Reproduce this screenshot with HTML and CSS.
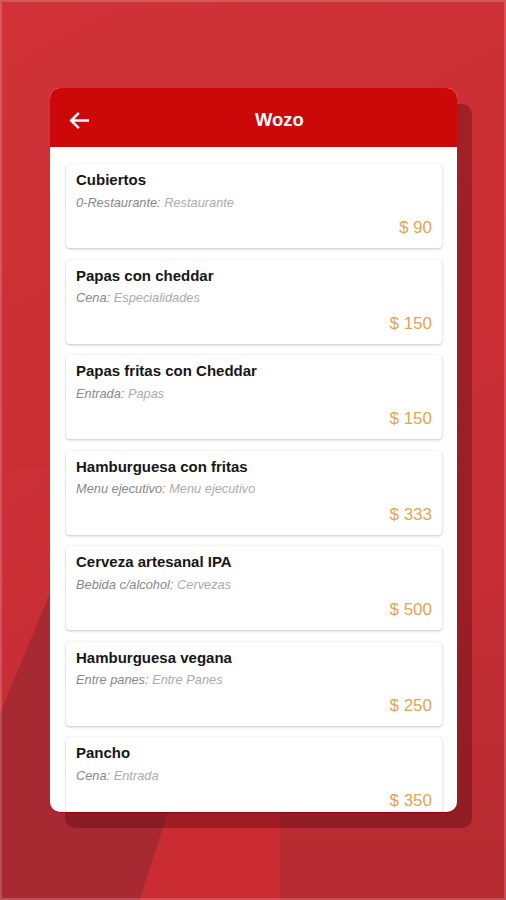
FILE: index.html
```html
<!DOCTYPE html>
<html lang="es">
<head>
<meta charset="utf-8">
<title>Wozo</title>
<link rel="stylesheet" href="styles.css">
</head>
<body>
<div class="screen">
  <svg class="bg" width="506" height="900" viewBox="0 0 506 900" aria-hidden="true">
    <defs>
      <linearGradient id="base" x1="0" y1="0" x2="0.3" y2="1">
        <stop offset="0" stop-color="#d03237"/>
        <stop offset="1" stop-color="#c42d34"/>
      </linearGradient>
      <linearGradient id="right" x1="0" y1="0" x2="0" y2="1">
        <stop offset="0" stop-color="#c22d34"/>
        <stop offset="1" stop-color="#b42a30"/>
      </linearGradient>
    </defs>
    <rect width="506" height="900" fill="url(#base)"/>
    <polygon points="48,468 4,582 0,590 0,470" fill="#cb3239" opacity="0.6"/>
    <polygon points="280,700 506,600 506,900 280,900" fill="url(#right)"/>
    <polygon points="50,593 0,713 0,900 140,900 168,812 200,600" fill="#a72a33"/>
    <polygon points="140,900 168,812 280,812 280,900" fill="#cb2b33"/>
  </svg>
  <div class="frame">
    <header class="bar">
      <svg class="back" width="20" height="17" viewBox="0 0 20 17" aria-hidden="true">
        <path d="M19 8.5H2.5M9 1.8L2.2 8.5L9 15.2" fill="none" stroke="#fff" stroke-width="2.4" stroke-linecap="square"/>
      </svg>
      <h1 class="title">Wozo</h1>
    </header>
    <div class="list">
      <div class="item">
        <div class="name">Cubiertos</div>
        <div class="cat"><span class="grp">0-Restaurante:</span> Restaurante</div>
        <div class="price">$ 90</div>
      </div>
      <div class="item">
        <div class="name">Papas con cheddar</div>
        <div class="cat"><span class="grp">Cena:</span> Especialidades</div>
        <div class="price">$ 150</div>
      </div>
      <div class="item">
        <div class="name">Papas fritas con Cheddar</div>
        <div class="cat"><span class="grp">Entrada:</span> Papas</div>
        <div class="price">$ 150</div>
      </div>
      <div class="item">
        <div class="name">Hamburguesa con fritas</div>
        <div class="cat"><span class="grp">Menu ejecutivo:</span> Menu ejecutivo</div>
        <div class="price">$ 333</div>
      </div>
      <div class="item">
        <div class="name">Cerveza artesanal IPA</div>
        <div class="cat"><span class="grp">Bebida c/alcohol:</span> Cervezas</div>
        <div class="price">$ 500</div>
      </div>
      <div class="item">
        <div class="name">Hamburguesa vegana</div>
        <div class="cat"><span class="grp">Entre panes:</span> Entre Panes</div>
        <div class="price">$ 250</div>
      </div>
      <div class="item">
        <div class="name">Pancho</div>
        <div class="cat"><span class="grp">Cena:</span> Entrada</div>
        <div class="price">$ 350</div>
      </div>
    </div>
  </div>
</div>
</body>
</html>
```
FILE: styles.css
```css
html, body {
  margin: 0;
  padding: 0;
  background: #cd2f35;
}

.screen {
  position: relative;
  width: 506px;
  height: 900px;
  overflow: hidden;
  font-family: "Liberation Sans", Arial, sans-serif;
  display: flow-root;
}

.screen::after {
  content: "";
  position: absolute;
  inset: 0;
  box-shadow: inset 0 0 0 2px rgba(255, 255, 255, 0.18);
  pointer-events: none;
}

.bg {
  position: absolute;
  left: 0;
  top: 0;
  z-index: 0;
}

.frame {
  position: relative;
  z-index: 1;
  margin: 88px 0 0 50px;
  width: 407px;
  height: 724px;
  border-radius: 10px;
  background: #ffffff;
  overflow: hidden;
  box-shadow: 15px 16px 0 rgba(70, 0, 8, 0.33), 0 1px 0 #b5080c;
}

.bar {
  height: 59px;
  box-sizing: border-box;
  padding: 6px 0 0 19px;
  display: flex;
  align-items: center;
  background: #cd0808;
}

.back {
  display: block;
  flex: none;
}

.title {
  margin: 0 0 0 166px;
  color: #ffffff;
  font-size: 18.4px;
  font-weight: bold;
  line-height: 1;
}

.list {
  padding: 17px 15px 0 16px;
  display: flex;
  flex-direction: column;
  gap: 11.5px;
}

.item {
  height: 84px;
  flex: none;
  box-sizing: border-box;
  padding: 7px 10px 10px 10px;
  background: #ffffff;
  border-radius: 4px;
  box-shadow: 0 1px 3px rgba(0, 0, 0, 0.22), 0 0 1px rgba(0, 0, 0, 0.12);
  display: flex;
  flex-direction: column;
}

.name {
  font-size: 15px;
  line-height: 18px;
  font-weight: bold;
  color: #161616;
}

.cat {
  margin-top: 5.5px;
  font-size: 12.8px;
  line-height: 16px;
  font-style: italic;
  color: #ababab;
}

.grp {
  color: #888888;
}

.price {
  margin-top: auto;
  text-align: right;
  font-size: 17px;
  line-height: 20px;
  color: #e0a555;
}
```
